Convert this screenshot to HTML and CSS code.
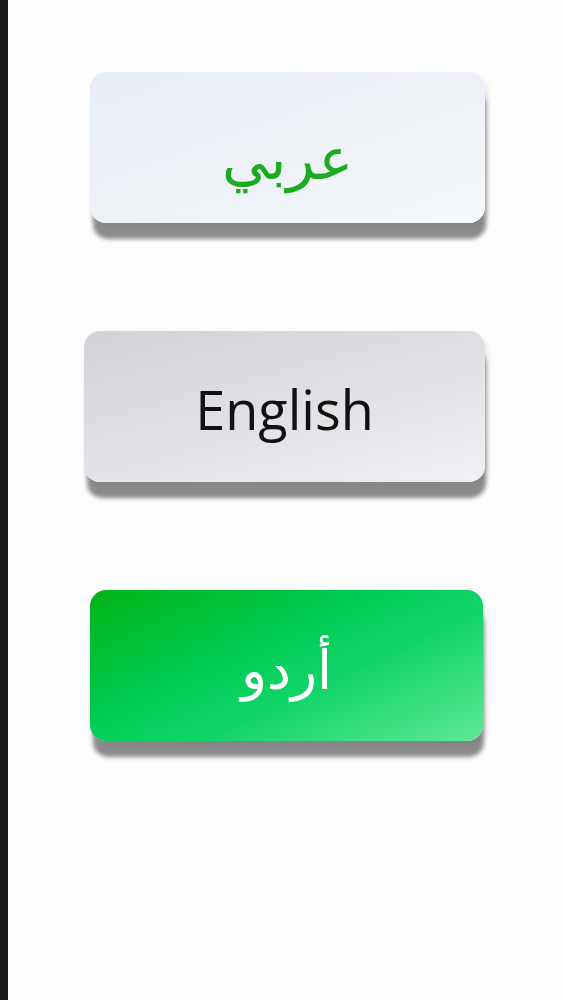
FILE: index.html
```html
<!DOCTYPE html>
<html lang="ar">
<head>
<meta charset="utf-8">
<link rel="stylesheet" href="styles.css">
</head>
<body>
<div class="screen">
  <div class="edge"></div>
  <main class="content">
    <button class="lang lang-ar">عربي</button>
    <button class="lang lang-en">English</button>
    <button class="lang lang-ur">أردو</button>
  </main>
</div>
</body>
</html>
```
FILE: styles.css
```css
html, body {
  margin: 0;
  padding: 0;
  background: #ffffff;
}
.screen {
  display: flex;
  min-height: 1000px;
}
.edge {
  width: 8px;
  background: #1b1a1d;
  flex: none;
}
.content {
  flex: 1;
  display: flex;
  flex-direction: column;
  padding-top: 72px;
  gap: 108px;
  background: #fdfdfd;
}
.lang {
  height: 151px;
  border: none;
  border-radius: 16px;
  display: flex;
  align-items: center;
  justify-content: center;
  box-shadow: 2px 17px 4px -1px rgba(70, 70, 70, 0.62), 3px 4px 6px rgba(0,0,0,0.08);
  padding: 0;
}
.lang-ar {
  margin-left: 82px;
  width: 395px;
  background: linear-gradient(160deg, #e8edf4 0%, #eef2f7 55%, #f7f9fb 100%);
  color: #1aab1e;
  font-family: "DejaVu Sans", sans-serif;
  font-size: 58px;
  padding-top: 22px;
}
.lang-en {
  margin-left: 76px;
  width: 401px;
  background: linear-gradient(165deg, #d2d1d5 0%, #e2e1e5 55%, #f1f0f3 100%);
  color: #111111;
  font-family: "Open Sans", "Noto Sans", sans-serif;
  font-weight: 500;
  font-size: 54px;
  padding-top: 4px;
}
.lang-ur {
  margin-left: 82px;
  width: 393px;
  background: linear-gradient(155deg, #00b414 0%, #00cc55 40%, #10d468 60%, #5ee895 100%);
  color: #ffffff;
  font-family: "DejaVu Sans", sans-serif;
  font-size: 54px;
  padding-top: 10px;
}
```
